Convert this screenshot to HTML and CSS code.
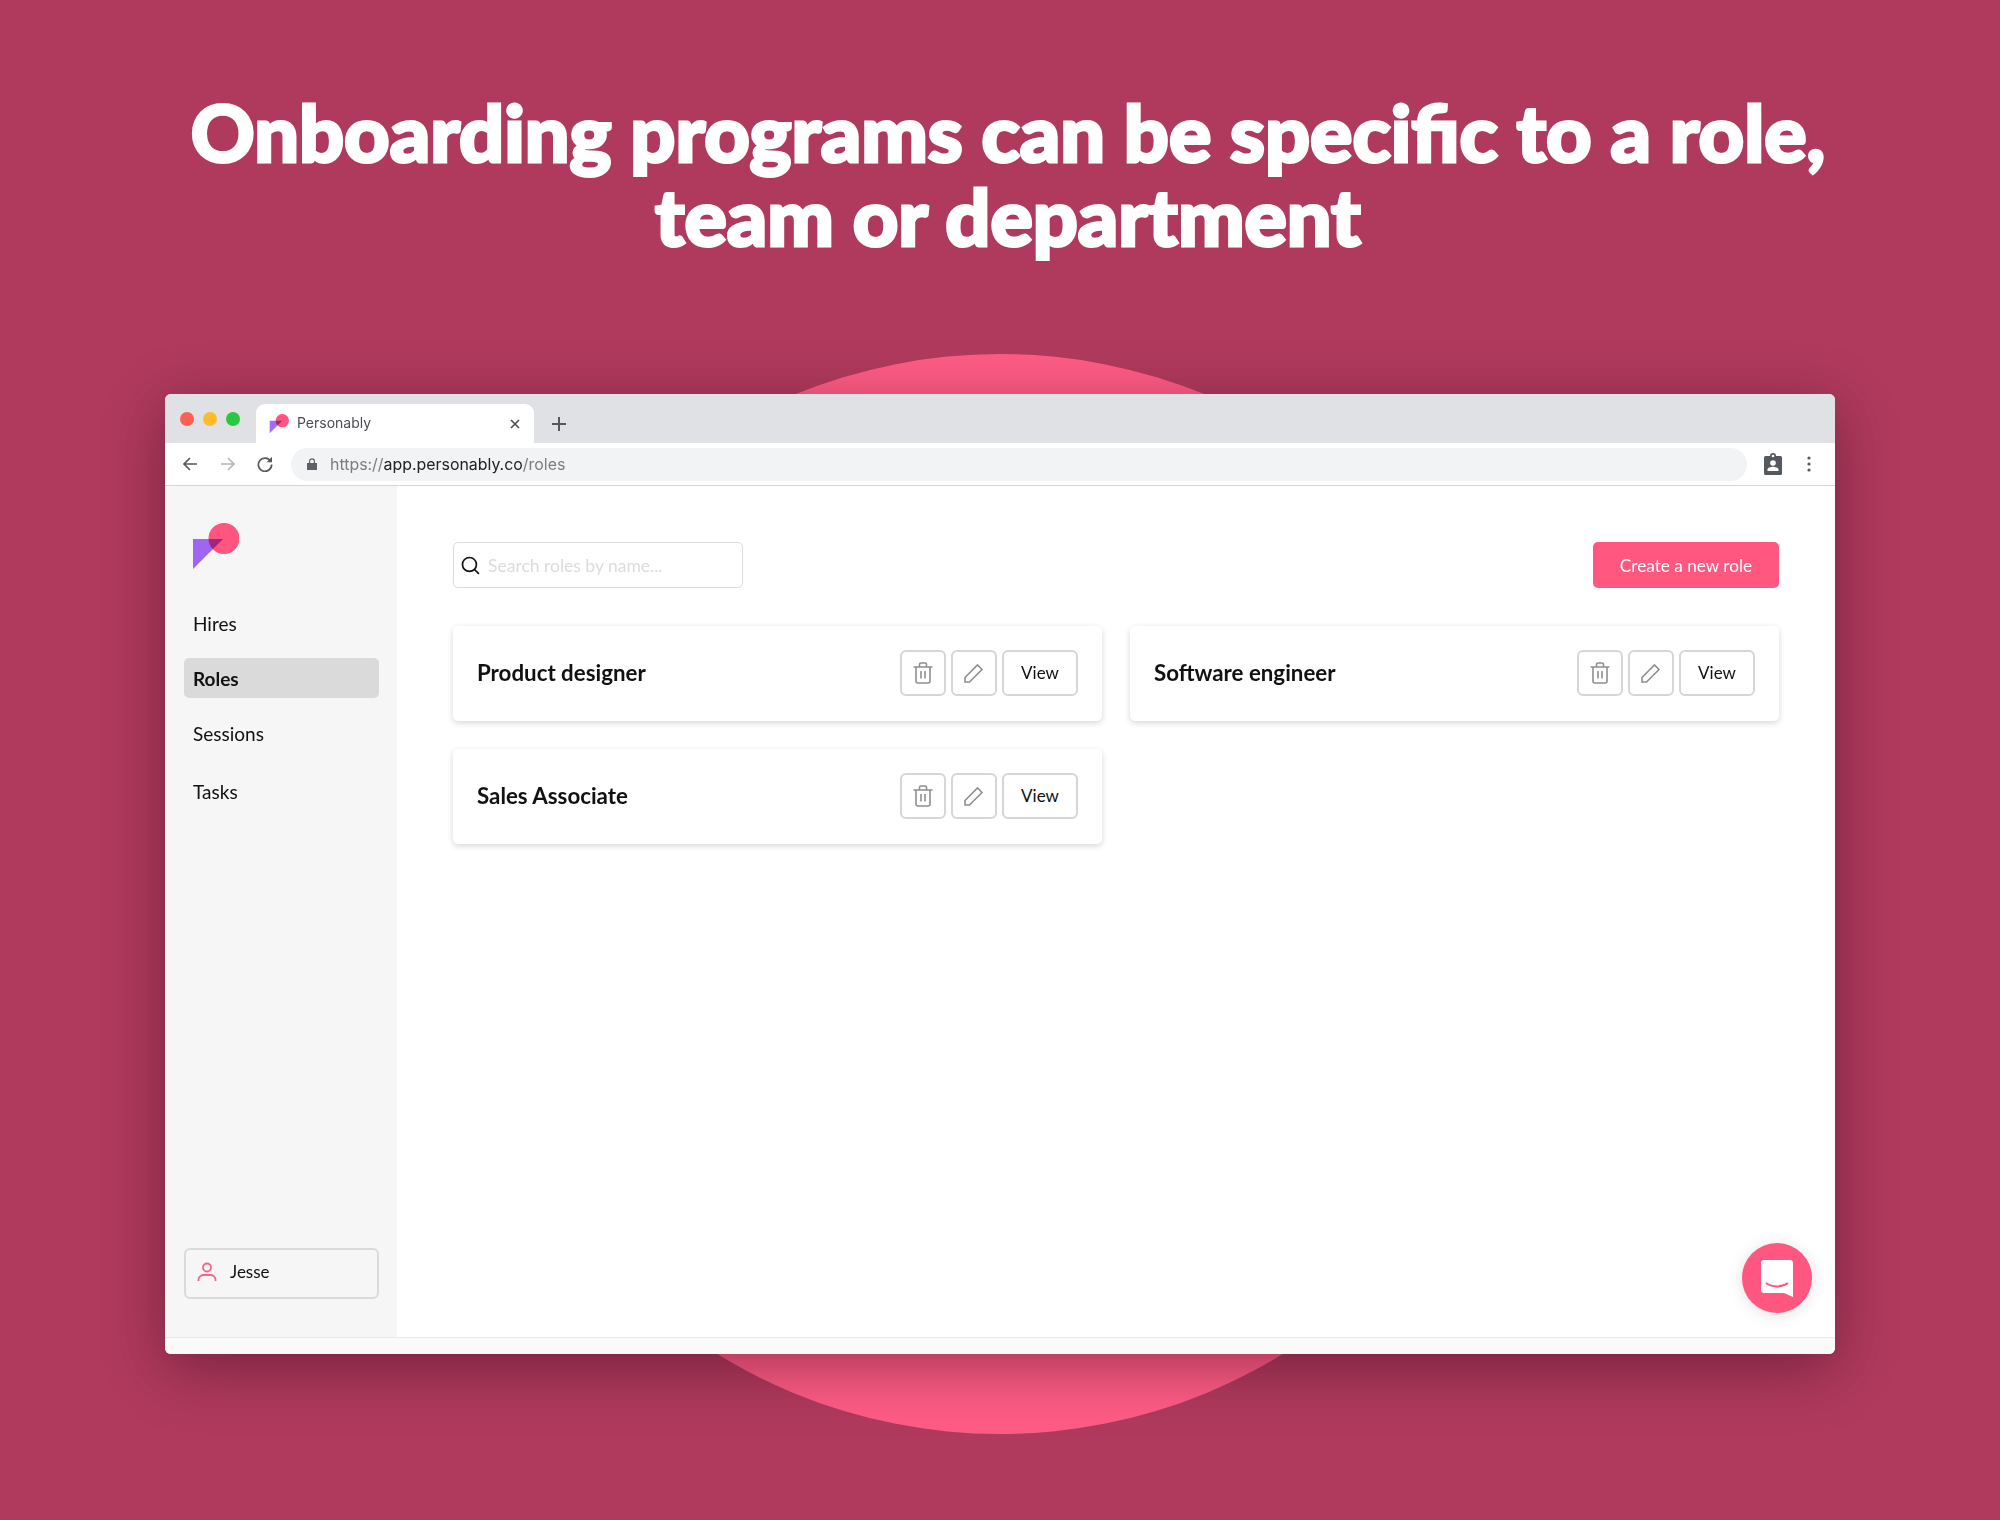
FILE: index.html
```html
<!DOCTYPE html>
<html lang="en">
<head>
    <meta charset="UTF-8">
    <title>Personably - Roles</title>
    <link rel="stylesheet" href="styles.css">
</head>
<body>
    <div class="stage">
        <h1 class="headline">Onboarding programs can be specific to a role,<br>team or department</h1>
        <div class="circle"></div>

        <div class="window">
            <div class="tabbar">
                <div class="lights">
                    <span class="light red"></span>
                    <span class="light yellow"></span>
                    <span class="light green"></span>
                </div>
                <div class="tab">
                    <svg class="favicon" viewBox="0 0 30 30" width="20" height="20">
                        <circle cx="20" cy="10" r="10" fill="#ff5580"/>
                        <polygon class="mult" points="1,10 20,10 1,29" fill="#a56bfa"/>
                    </svg>
                    <span class="tab-title">Personably</span>
                    <svg class="tab-close" viewBox="0 0 12 12" width="12" height="12">
                        <path d="M2 2l8 8M10 2l-8 8" stroke="#4a4d52" stroke-width="1.6" fill="none"/>
                    </svg>
                </div>
                <svg class="tab-new" viewBox="0 0 14 14" width="14" height="14">
                    <path d="M7 0v14M0 7h14" stroke="#54575c" stroke-width="2" fill="none"/>
                </svg>
            </div>

            <div class="toolbar">
                <svg class="tool-icon" viewBox="0 0 16 16" width="16" height="16">
                    <path d="M15 8H2M8 2L2 8l6 6" stroke="#55585c" stroke-width="1.7" fill="none"/>
                </svg>
                <svg class="tool-icon" viewBox="0 0 16 16" width="16" height="16">
                    <path d="M1 8h13M8 2l6 6-6 6" stroke="#b4b6b9" stroke-width="1.7" fill="none"/>
                </svg>
                <svg class="tool-icon" viewBox="0 0 16 16" width="16" height="16">
                    <path d="M13.6 5.2A6.6 6.6 0 1 0 14.6 8.6" stroke="#55585c" stroke-width="1.7" fill="none"/>
                    <path d="M15 0.8v5.4H9.6z" fill="#55585c"/>
                </svg>
                <div class="url-pill">
                    <svg viewBox="0 0 10 12" width="10" height="12">
                        <path d="M0 5h10v7H0z" fill="#5c5f63"/>
                        <path d="M2.6 5V3.2a2.4 2.4 0 0 1 4.8 0V5" fill="none" stroke="#5c5f63" stroke-width="1.2"/>
                    </svg>
                    <span class="url"><span class="url-dim">https://</span>app.personably.co<span class="url-dim">/roles</span></span>
                </div>
                <svg class="badge-icon" viewBox="0 0 18 22" width="18" height="22">
                    <path d="M1.5 3H6a3 3 0 0 1 6 0h4.5A1.5 1.5 0 0 1 18 4.5V20.5A1.5 1.5 0 0 1 16.5 22H1.5A1.5 1.5 0 0 1 0 20.5V4.5A1.5 1.5 0 0 1 1.5 3z" fill="#55585c"/>
                    <circle cx="9" cy="3" r="1.3" fill="#fff"/>
                    <circle cx="9" cy="10" r="2.8" fill="#fff"/>
                    <path d="M3.5 18v-1.5c0-1.800 3.5-2.800 5.5-2.800s5.5 1 5.500 2.800V18z" fill="#fff"/>
                </svg>
                <svg class="dots-icon" viewBox="0 0 4 16" width="4" height="16">
                    <circle cx="2" cy="2" r="1.6" fill="#55585c"/>
                    <circle cx="2" cy="8" r="1.6" fill="#55585c"/>
                    <circle cx="2" cy="14" r="1.6" fill="#55585c"/>
                </svg>
            </div>

            <div class="app">
                <aside class="sidebar">
                    <svg class="logo" viewBox="0 0 46 46" width="46" height="46">
                        <circle cx="31" cy="15.5" r="15.5" fill="#ff5580"/>
                        <polygon class="mult" points="0,16 30,16 0,46" fill="#a56bfa"/>
                    </svg>
                    <nav class="nav">
                        <a class="nav-item hires">Hires</a>
                        <a class="nav-item active">Roles</a>
                        <a class="nav-item">Sessions</a>
                        <a class="nav-item tasks">Tasks</a>
                    </nav>
                    <div class="user-box">
                        <svg viewBox="0 0 20 20" width="20" height="20">
                            <circle cx="10" cy="5.5" r="4" fill="none" stroke="#f4648c" stroke-width="1.8"/>
                            <path d="M1.5 19v-1.5c0-3 3-4.5 5-4.5h7c2 0 5 1.5 5 4.5V19" fill="none" stroke="#f4648c" stroke-width="1.8"/>
                        </svg>
                        <span>Jesse</span>
                    </div>
                </aside>

                <main class="main">
                    <div class="top-row">
                        <div class="search">
                            <svg viewBox="0 0 18 18" width="19" height="19">
                                <circle cx="8" cy="8" r="6.6" fill="none" stroke="#111" stroke-width="1.6"/>
                                <path d="M12.8 12.8l4.2 4.2" stroke="#111" stroke-width="1.6"/>
                            </svg>
                            <span class="placeholder">Search roles by name...</span>
                        </div>
                        <button class="create-btn">Create a new role</button>
                    </div>

                    <div class="role-grid">
                        <div class="role-card">
                            <span class="role-name">Product designer</span>
                            <div class="role-actions">
                                <button class="icon-btn"><svg viewBox="0 0 20 22" width="20" height="22"><use href="#trash"/></svg></button>
                                <button class="icon-btn"><svg viewBox="0 0 20 20" width="20" height="20"><use href="#pencil"/></svg></button>
                                <button class="view-btn">View</button>
                            </div>
                        </div>
                        <div class="role-card">
                            <span class="role-name">Software engineer</span>
                            <div class="role-actions">
                                <button class="icon-btn"><svg viewBox="0 0 20 22" width="20" height="22"><use href="#trash"/></svg></button>
                                <button class="icon-btn"><svg viewBox="0 0 20 20" width="20" height="20"><use href="#pencil"/></svg></button>
                                <button class="view-btn">View</button>
                            </div>
                        </div>
                        <div class="role-card">
                            <span class="role-name">Sales Associate</span>
                            <div class="role-actions">
                                <button class="icon-btn"><svg viewBox="0 0 20 22" width="20" height="22"><use href="#trash"/></svg></button>
                                <button class="icon-btn"><svg viewBox="0 0 20 20" width="20" height="20"><use href="#pencil"/></svg></button>
                                <button class="view-btn">View</button>
                            </div>
                        </div>
                    </div>

                    <div class="chat-fab">
                        <svg viewBox="0 0 32 37" width="32" height="37">
                            <path d="M3 0h26a3 3 0 0 1 3 3v34l-9-4H3a3 3 0 0 1-3-3V3a3 3 0 0 1 3-3z" fill="#fff"/>
                            <path d="M5 23c6 4.5 16 4.5 22 0" fill="none" stroke="#ff5580" stroke-width="2"/>
                        </svg>
                    </div>
                </main>
            </div>
            <div class="status-strip"></div>
        </div>
    </div>

    <svg class="defs" width="0" height="0">
        <defs>
            <g id="trash" fill="none" stroke="#8f8f8f" stroke-width="1.6">
                <path d="M0.5 5h19M6.5 5V2.5a1.5 1.5 0 0 1 1.5-1.5h4a1.5 1.5 0 0 1 1.5 1.5V5"/>
                <path d="M3 5v14a2 2 0 0 0 2 2h10a2 2 0 0 0 2-2V5"/>
                <path d="M8 9v7.5M12 9v7.5"/>
            </g>
            <g id="pencil" fill="none" stroke="#8f8f8f" stroke-width="1.6">
                <path d="M1 14.5L13.5 2l4.5 4.5L5.5 19H1z"/>
            </g>
        </defs>
    </svg>
</body>
</html>
```

FILE: styles.css
```css
* {
    box-sizing: border-box;
}
html, body {
    margin: 0;
    padding: 0;
}
body {
    width: 2000px;
    height: 1520px;
    overflow: hidden;
    background: #b03a5e;
    font-family: 'Lato', 'Open Sans', sans-serif;
    color: #111;
}
.stage {
    position: relative;
    width: 2000px;
    height: 1520px;
    padding: 90px 165px 0;
}
.headline {
    margin: 0 -76px 0 -60px;
    height: 304px;
    text-align: center;
    color: #fff;
    font-family: 'Lato', sans-serif;
    font-weight: 900;
    font-size: 79px;
    line-height: 84px;
    letter-spacing: 0;
    -webkit-text-stroke: 3px #fff;
}
.circle {
    position: absolute;
    left: 460px;
    top: 354px;
    width: 1080px;
    height: 1080px;
    border-radius: 50%;
    background: #ff5c85;
}

/* browser window */
.window {
    position: relative;
    width: 1670px;
    height: 960px;
    display: flex;
    flex-direction: column;
    background: #fff;
    border-radius: 6px;
    overflow: hidden;
    box-shadow: 0 14px 60px rgba(40, 0, 20, 0.42);
}
.tabbar {
    height: 49px;
    flex: none;
    display: flex;
    align-items: flex-end;
    background: #dfe1e5;
}
.lights {
    display: flex;
    gap: 9px;
    padding: 0 0 17px 15px;
    width: 91px;
}
.light {
    width: 14px;
    height: 14px;
    flex: none;
    border-radius: 50%;
}
.light.red { background: #fb5f57; }
.light.yellow { background: #fdbb2e; }
.light.green { background: #29c840; }
.tab {
    width: 278px;
    height: 39px;
    display: flex;
    align-items: center;
    padding: 0 13px;
    background: #fff;
    border-radius: 9px 9px 0 0;
}
.favicon {
    flex: none;
}
.mult {
    mix-blend-mode: multiply;
}
.tab-title {
    margin: 0 0 2px 8px;
    flex: 1;
    font-family: 'Inter', sans-serif;
    font-size: 14px;
    color: #4a4d52;
}
.tab-new {
    margin: 0 0 12px 18px;
}
.toolbar {
    height: 43px;
    flex: none;
    display: flex;
    align-items: center;
    padding: 0 0 0 17px;
    gap: 21.5px;
    background: #fff;
    border-bottom: 1px solid #d4d5d8;
}
.url-pill {
    width: 1456px;
    height: 33px;
    margin-left: -3.5px;
    display: flex;
    align-items: center;
    gap: 13px;
    padding-left: 16px;
    border-radius: 17px;
    background: #f1f3f4;
}
.url {
    font-family: 'Inter', sans-serif;
    font-size: 15.9px;
    color: #202124;
}
.url-dim {
    color: #7a7d82;
}
.badge-icon {
    margin-left: -5px;
}
.dots-icon {
    margin-left: 3.5px;
}

/* app */
.app {
    flex: 1;
    display: flex;
    min-height: 0;
}
.sidebar {
    width: 232px;
    flex: none;
    display: flex;
    flex-direction: column;
    padding: 37px 18px 38px 19px;
    background: #f6f6f6;
}
.logo {
    margin-left: 9px;
    flex: none;
}
.nav {
    margin-top: 36px;
    display: flex;
    flex-direction: column;
    gap: 13px;
    flex: 1;
}
.nav-item {
    height: 40px;
    display: flex;
    align-items: center;
    padding: 0 9px;
    font-size: 19px;
    border-radius: 5px;
    color: #111;
}
.nav-item.hires {
    padding-bottom: 3px;
}
.nav-item.active {
    background: #dadada;
    font-weight: 700;
}
.nav-item:nth-child(3) {
    margin-top: 2px;
}
.nav-item.tasks {
    margin-top: 5px;
}
.user-box {
    height: 51px;
    display: flex;
    align-items: center;
    gap: 13px;
    padding: 0 0 4px 11px;
    border: 2.5px solid #dadada;
    border-radius: 6px;
    font-size: 17px;
}
.main {
    flex: 1;
    position: relative;
    padding: 56px 56px 0;
}
.top-row {
    display: flex;
    justify-content: space-between;
    align-items: center;
}
.search {
    width: 290px;
    height: 46px;
    display: flex;
    align-items: center;
    gap: 8px;
    padding-left: 7px;
    border: 1.5px solid #dcdcdc;
    border-radius: 5px;
    background: #fff;
}
.placeholder {
    font-size: 17.5px;
    color: #dcdcdc;
}
.create-btn {
    width: 186px;
    height: 46px;
    border: none;
    border-radius: 5px;
    background: #ff5780;
    color: #fff;
    font-family: inherit;
    font-size: 17.2px;
}
.role-grid {
    margin-top: 38px;
    display: grid;
    grid-template-columns: 649px 649px;
    column-gap: 28px;
    row-gap: 28px;
}
.role-card {
    height: 95px;
    display: flex;
    align-items: center;
    justify-content: space-between;
    padding: 0 24px;
    background: #fff;
    border-radius: 5px;
    box-shadow: 0 2px 6px rgba(0, 0, 0, 0.16);
}
.role-name {
    margin-bottom: 2px;
    font-size: 22.3px;
    font-weight: 700;
}
.role-actions {
    display: flex;
    gap: 5px;
    margin-bottom: 2px;
}
.icon-btn,
.view-btn {
    height: 46px;
    display: flex;
    align-items: center;
    justify-content: center;
    padding: 0;
    background: #fff;
    border: 2.5px solid #d6d6d6;
    border-radius: 6px;
    font-family: inherit;
    font-size: 17px;
    color: #111;
}
.icon-btn {
    width: 46px;
}
.view-btn {
    width: 76px;
}
.chat-fab {
    position: absolute;
    right: 23px;
    bottom: 24px;
    width: 70px;
    height: 70px;
    display: flex;
    align-items: center;
    justify-content: center;
    border-radius: 50%;
    background: #ff5780;
    box-shadow: 0 2px 16px rgba(0, 0, 0, 0.12);
}
.status-strip {
    height: 17px;
    flex: none;
    background: #fafafa;
    border-top: 1px solid #e8e8e8;
}
.defs {
    position: absolute;
}
```
